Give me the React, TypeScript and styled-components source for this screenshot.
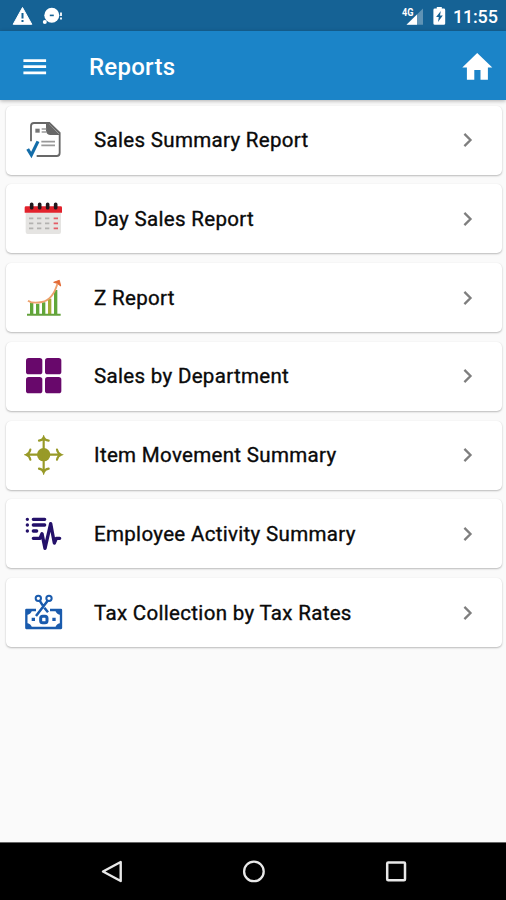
import React from 'react';
import styled, { createGlobalStyle } from 'styled-components';

const GlobalStyle = createGlobalStyle`
  * { box-sizing: border-box; }
  body { margin: 0; background: #fafafa; font-family: Roboto, "Liberation Sans", sans-serif; }
`;

const Screen = styled.div`
  width: 506px;
  height: 900px;
  display: flex;
  flex-direction: column;
  overflow: hidden;
  background: #fafafa;
`;

const StatusBar = styled.div`
  height: 31px;
  flex: none;
  display: flex;
  align-items: center;
  justify-content: space-between;
  padding: 0 9px 0 12px;
  background: #156295;
  color: #fff;
`;

const StatusGroup = styled.div`
  display: flex;
  align-items: center;
`;

const Clock = styled.span`
  width: 44px;
  margin-left: 6px;
  padding-top: 2px;
  font-size: 18px;
  line-height: 20px;
  font-weight: 500;
  letter-spacing: -0.2px;
  white-space: nowrap;
`;

const AppBar = styled.header`
  height: 69px;
  flex: none;
  display: flex;
  align-items: center;
  padding: 2px 13px 0 23px;
  background: #1b84c8;
  color: #fff;
  box-shadow: 0 1px 4px rgba(0, 0, 0, 0.3);
  z-index: 1;
`;

const IconButton = styled.button`
  display: flex;
  padding: 0;
  border: 0;
  background: none;
  color: inherit;
`;

const Title = styled.h1`
  flex: 1;
  margin: 0 0 0 42px;
  font-size: 24px;
  line-height: 28px;
  font-weight: 500;
  letter-spacing: 0.25px;
`;

const List = styled.main`
  flex: 1;
  display: flex;
  flex-direction: column;
  gap: 9.75px;
  padding: 5.6px 4px 0 6px;
`;

const Card = styled.div`
  height: 69px;
  display: flex;
  align-items: center;
  padding: 0 26px 0 18px;
  border-radius: 5px;
  background: #fff;
  box-shadow: 0 1px 2px rgba(0, 0, 0, 0.26), 0 0 1px rgba(0, 0, 0, 0.07);
`;

const Label = styled.span`
  flex: 1;
  margin-left: 30px;
  color: #0a0a0a;
  font-size: 20.5px;
  line-height: 24px;
  font-weight: 400;
  letter-spacing: 0.32px;
  -webkit-text-stroke: 0.35px #0a0a0a;
  white-space: nowrap;
`;

const NavBar = styled.nav`
  height: 58px;
  flex: none;
  display: grid;
  grid-template-columns: repeat(3, 142px);
  justify-content: center;
  justify-items: center;
  align-items: center;
  border-top: 1px solid #666;
  background: #000;
  padding-left: 2px;
`;

const Glyph = ({ box, children }: { box: string; children: React.ReactNode }) => (
  <svg width="40" height="40" viewBox={box} fill="none">{children}</svg>
);

const SummaryIcon = () => (
  <Glyph box="72 60 120 120">
    <path d="M93 124V78q0-9 9-9h46l31 30v60q0 9-9 9h-60" stroke="#686868" strokeWidth="5.5" />
    <path d="M142 67l38 38h-30q-12-2-12-14V67z" fill="#686868" />
    <path d="M106 86h13v12h-13z" fill="#777" />
    <path d="M125 87h14M125 96h14M124 125h41M124 136h41" stroke="#999" strokeWidth="5" />
    <path d="M83 147l11 18 20-41" stroke="#146da9" strokeWidth="9.5" />
  </Glyph>
);

const CalendarIcon = () => (
  <Glyph box="30 26 120 120">
    <path d="M35 66h106v59q0 6-6 6H41q-6 0-6-6z" fill="#e5e4e2" />
    <path d="M32 52q0-4 4-4h104q4 0 4 4v15H32z" fill="#e2222c" />
    <path d="M53 42v10M77 42v10M101 42v10M125 42v10" stroke="#20171c" strokeWidth="11" strokeLinecap="round" />
    <path d="M45 84h13M69 84h13M93 84h13M45 99h13M69 99h13M93 99h13M45 114h13M69 114h13M93 114h13" stroke="#b3b2b0" strokeWidth="5" />
    <path d="M119 84h13M119 99h13M119 114h13" stroke="#e45d67" strokeWidth="5" />
  </Glyph>
);

const GrowthIcon = () => (
  <Glyph box="30 22 120 120">
    <path d="M53 97v36M71 99v34M89 95v38M125 58v75" stroke="#60a639" strokeWidth="10" />
    <path d="M107 84v49" stroke="#a4ab35" strokeWidth="10" />
    <path d="M39 132h101" stroke="#64a23c" strokeWidth="6" />
    <path d="M42 90c10 7 27 7 42 4 25-5 38-27 46-54" stroke="#eda06c" strokeWidth="5.5" />
    <path d="M119 35l17-6 4 17-10-8z" fill="#e36a35" stroke="#e36a35" strokeWidth="3" />
  </Glyph>
);

const GridIcon = () => (
  <Glyph box="30 33 120 120">
    {[[36, 39], [93, 39], [36, 96], [93, 96]].map(([x, y]) => (
      <rect key={`${x}-${y}`} x={x} y={y} width="49" height="49" rx="8" fill="#68086b" />
    ))}
  </Glyph>
);

const MovementIcon = () => (
  <Glyph box="30 30 120 120">
    <circle cx="89" cy="89" r="20" fill="#989a28" />
    <path d="M38 89h101M89 38v103M75 47q11-2 14-10 3 8 15 10M75 131q11 2 14 11 3-9 15-11M49 74q-2 11-12 15 10 4 12 15M129 74q2 11 12 15-10 4-12 15" stroke="#989a28" strokeWidth="6.5" strokeLinecap="round" />
  </Glyph>
);

const ActivityIcon = () => (
  <Glyph box="30 26 120 120">
    <path d="M40 42h.1M40 59h.1M40 77h.1" stroke="#24116a" strokeWidth="10" strokeLinecap="round" />
    <path d="M58 42h34M58 59h34M58 77h10" stroke="#24116a" strokeWidth="10" strokeLinecap="round" />
    <path d="M58 99h20l6-14 9 44 17-74 11 58 6-14h10" stroke="#24116a" strokeWidth="10" strokeLinecap="round" strokeLinejoin="round" />
  </Glyph>
);

const TaxIcon = () => (
  <Glyph box="30 31 120 120">
    <path d="M66 82H37v54h104V82h-33" stroke="#1a5bad" strokeWidth="7" strokeLinejoin="round" />
    <path d="M37 82h17q-2 13-17 15zM141 82h-17q2 13 17 15zM37 136h17q-2-13-17-15zM141 136h-17q2-13 17-15z" fill="#1a5bad" />
    <circle cx="73" cy="47" r="8" stroke="#1a5bad" strokeWidth="6" />
    <circle cx="105" cy="47" r="8" stroke="#1a5bad" strokeWidth="6" />
    <path d="M77 54l9 14M101 54L66 100M91 75l11 14" stroke="#1a5bad" strokeWidth="7.5" />
    <rect x="80" y="101" width="19" height="19" rx="6" stroke="#1a5bad" strokeWidth="9" />
    <path d="M53 110h10M115 110h10" stroke="#1a5bad" strokeWidth="10" />
  </Glyph>
);

const Chevron = () => (
  <svg width="16" height="20" viewBox="0 0 16 20" fill="none">
    <path d="M4.4 3.9l6.1 6.1-6.1 6.1" stroke="#7e7e7e" strokeWidth="2.3" />
  </svg>
);

const reports = [
  { label: 'Sales Summary Report', Icon: SummaryIcon },
  { label: 'Day Sales Report', Icon: CalendarIcon },
  { label: 'Z Report', Icon: GrowthIcon },
  { label: 'Sales by Department', Icon: GridIcon },
  { label: 'Item Movement Summary', Icon: MovementIcon },
  { label: 'Employee Activity Summary', Icon: ActivityIcon },
  { label: 'Tax Collection by Tax Rates', Icon: TaxIcon },
];

export default function App() {
  return (
    <Screen>
      <GlobalStyle />
      <StatusBar>
        <StatusGroup>
          <svg width="54" height="31" viewBox="12 0 54 31">
            <path d="M22.5 7.5l9.3 16.8H13.2z" fill="#fff" stroke="#fff" strokeLinejoin="round" />
            <path d="M22.5 13v5.5M22.5 20v2" stroke="#156295" strokeWidth="2" />
            <circle cx="51.8" cy="15.3" r="7.5" fill="#fff" />
            <circle cx="44.8" cy="22" r="2" fill="#fff" />
            <path d="M49.8 15.4h4" stroke="#156295" strokeWidth="1.6" />
            <path d="M61 12.5v3.5M61 17.5v2" stroke="#fff" strokeWidth="1.8" />
          </svg>
        </StatusGroup>
        <StatusGroup>
          <svg width="46" height="31" viewBox="400 0 46 31">
            <path d="M422 8.5v16.3h-16.5z" fill="#5f93b5" />
            <path d="M416 14.4v10.4h-10.5z" fill="#fff" />
            <text x="401" y="15.5" fill="#fff" fontSize="10" fontWeight="700" textLength="11.5" lengthAdjust="spacingAndGlyphs">4G</text>
            <path d="M433.8 8.5h2V7h5v1.5h2q1.4 0 1.4 1.4v13.5q0 1.4-1.4 1.4h-9q-1.4 0-1.4-1.4V9.9q0-1.4 1.4-1.4z" fill="#fff" />
            <path d="M439.8 11l-4.7 6h2.7l-.8 5 4.8-6.5h-2.8z" fill="#156295" />
          </svg>
          <Clock>11:55</Clock>
        </StatusGroup>
      </StatusBar>
      <AppBar>
        <IconButton aria-label="Menu">
          <svg width="24" height="20" viewBox="0 0 24 20">
            <path d="M.4 3.6h22.7M.4 9.7h22.7M.4 15.8h22.7" stroke="#fff" strokeWidth="2.7" />
          </svg>
        </IconButton>
        <Title>Reports</Title>
        <IconButton aria-label="Home">
          <svg width="32" height="30" viewBox="461 51 32 30">
            <path d="M477.2 52l15.1 14.6h-4.4v12.2h-7.4v-9.7h-6.2v9.7h-7.4V66.6h-4.6z" fill="#fff" />
          </svg>
        </IconButton>
      </AppBar>
      <List>
        {reports.map(({ label, Icon }) => (
          <Card key={label}>
            <Icon />
            <Label>{label}</Label>
            <Chevron />
          </Card>
        ))}
      </List>
      <NavBar>
        <svg width="24" height="24" viewBox="0 0 24 24" fill="none">
          <path d="M20.7 2v19L3 11.5z" stroke="#e8e8e8" strokeWidth="2.4" strokeLinejoin="round" />
        </svg>
        <svg width="24" height="24" viewBox="0 0 24 24" fill="none">
          <circle cx="11.9" cy="11.4" r="9.8" stroke="#e8e8e8" strokeWidth="2.3" />
        </svg>
        <svg width="24" height="24" viewBox="0 0 24 24" fill="none">
          <rect x="3.2" y="2.4" width="17.8" height="17.8" rx="1" stroke="#e8e8e8" strokeWidth="2.5" />
        </svg>
      </NavBar>
    </Screen>
  );
}
